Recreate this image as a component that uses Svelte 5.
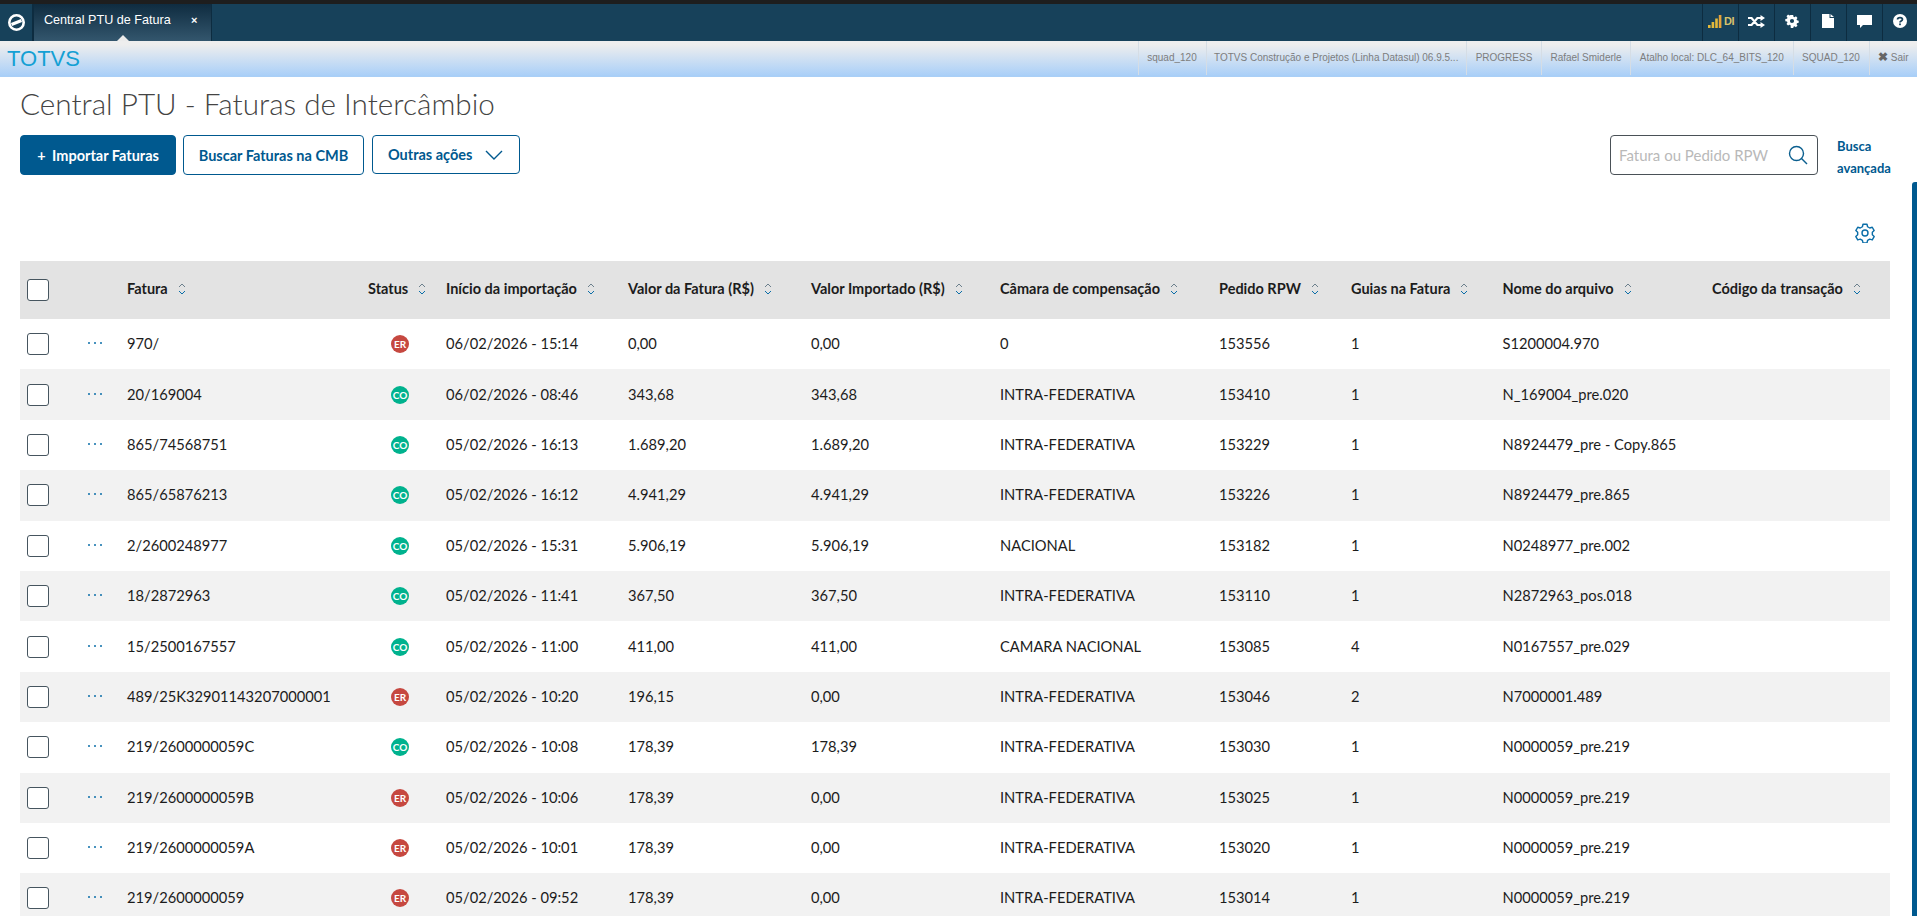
<script>
  const cols = [
    ['Fatura', 'f'], ['Status', 's'], ['Início da importação'], ['Valor da Fatura (R$)'], ['Valor Importado (R$)'],
    ['Câmara de compensação'], ['Pedido RPW'], ['Guias na Fatura'], ['Nome do arquivo'], ['Código da transação']
  ];
  const rows = [
    ['970/', 'ER', '06/02/2026 - 15:14', '0,00', '0,00', '0', '153556', '1', 'S1200004.970'],
    ['20/169004', 'CO', '06/02/2026 - 08:46', '343,68', '343,68', 'INTRA-FEDERATIVA', '153410', '1', 'N_169004_pre.020'],
    ['865/74568751', 'CO', '05/02/2026 - 16:13', '1.689,20', '1.689,20', 'INTRA-FEDERATIVA', '153229', '1', 'N8924479_pre - Copy.865'],
    ['865/65876213', 'CO', '05/02/2026 - 16:12', '4.941,29', '4.941,29', 'INTRA-FEDERATIVA', '153226', '1', 'N8924479_pre.865'],
    ['2/2600248977', 'CO', '05/02/2026 - 15:31', '5.906,19', '5.906,19', 'NACIONAL', '153182', '1', 'N0248977_pre.002'],
    ['18/2872963', 'CO', '05/02/2026 - 11:41', '367,50', '367,50', 'INTRA-FEDERATIVA', '153110', '1', 'N2872963_pos.018'],
    ['15/2500167557', 'CO', '05/02/2026 - 11:00', '411,00', '411,00', 'CAMARA NACIONAL', '153085', '4', 'N0167557_pre.029'],
    ['489/25K32901143207000001', 'ER', '05/02/2026 - 10:20', '196,15', '0,00', 'INTRA-FEDERATIVA', '153046', '2', 'N7000001.489'],
    ['219/2600000059C', 'CO', '05/02/2026 - 10:08', '178,39', '178,39', 'INTRA-FEDERATIVA', '153030', '1', 'N0000059_pre.219'],
    ['219/2600000059B', 'ER', '05/02/2026 - 10:06', '178,39', '0,00', 'INTRA-FEDERATIVA', '153025', '1', 'N0000059_pre.219'],
    ['219/2600000059A', 'ER', '05/02/2026 - 10:01', '178,39', '0,00', 'INTRA-FEDERATIVA', '153020', '1', 'N0000059_pre.219'],
    ['219/2600000059', 'ER', '05/02/2026 - 09:52', '178,39', '0,00', 'INTRA-FEDERATIVA', '153014', '1', 'N0000059_pre.219']
  ];
  const info = [
    ['squad_120', 68], ['TOTVS Construção e Projetos (Linha Datasul) 06.9.5...', 260.5], ['PROGRESS', 75],
    ['Rafael Smiderle', 89], ['Atalho local: DLC_64_BITS_120', 162.5], ['SQUAD_120', 76]
  ];
</script>

<div class="page">
  <div class="strip"></div>
  <header class="topbar">
    <div class="home">
      <svg width="19" height="19" viewBox="0 0 19 19" fill="none" stroke="#fff">
        <circle cx="9.5" cy="9.5" r="7.2" stroke-width="2.6" />
        <path d="M4.5 11.5 L14.5 7.5" stroke-width="3" />
      </svg>
    </div>
    <div class="tab">
      <span class="tab-title">Central PTU de Fatura</span>
      <span class="tab-x">×</span>
      <i class="notch"></i>
    </div>
    <div class="tools">
      <div class="tool signal">
        <svg width="14" height="13" viewBox="0 0 14 13" fill="#e2b93b">
          <rect x="0" y="10" width="2.6" height="3" /><rect x="3.6" y="7" width="2.6" height="6" />
          <rect x="7.2" y="3.5" width="2.6" height="9.5" /><rect x="10.8" y="0" width="2.6" height="13" fill="#e8a33a" />
        </svg>
        <span>DI</span>
      </div>
      <div class="tool">
        <svg width="17" height="13" viewBox="0 0 17 13" fill="none" stroke="#fff" stroke-width="2.2">
          <path d="M0 3 H3.6 L9.4 10 H13 M0 10 H3.6 L9.4 3 H13" />
          <path d="M12.5 0 L17 3 L12.5 6 Z M12.5 7 L17 10 L12.5 13 Z" fill="#fff" stroke="none" />
        </svg>
      </div>
      <div class="tool">
        <svg width="14" height="14" viewBox="0 0 16 16">
          <path fill="#fff" fill-rule="evenodd" d="M6.4 0h3.2l.4 2.3 1.4.6 1.9-1.3 2.1 2.2-1.3 1.9.6 1.4 2.3.4v3l-2.3.4-.6 1.4 1.3 1.9-2.1 2.2-1.9-1.3-1.4.6-.4 2.3H6.4L6 13.5l-1.4-.6-1.9 1.3L.6 12l1.3-1.9-.6-1.4L-1 8.3v-3l2.3-.4.6-1.4L.6 1.6 2.7-.6 4.6.7 6 .1zM8 5.2a2.6 2.6 0 100 5.6 2.6 2.6 0 000-5.6z" transform="translate(1.2 1.2) scale(.85)" />
        </svg>
      </div>
      <div class="tool">
        <svg width="12" height="14" viewBox="0 0 12 14"><path fill="#fff" d="M0 0H7.5V4H12V14H0Z M8.5 0 L12 3H8.5Z" /></svg>
      </div>
      <div class="tool">
        <svg width="15" height="13" viewBox="0 0 15 13"><path fill="#fff" d="M0 0H15V10H6L3 13V10H0Z" /></svg>
      </div>
      <div class="tool last">
        <svg width="14" height="14" viewBox="0 0 16 16">
          <circle cx="8" cy="8" r="8" fill="#fff" />
          <path d="M5.2 6.2 C5.2 3.4 10.8 3.4 10.8 6.2 C10.8 8 8 8 8 9.6" fill="none" stroke="#17415a" stroke-width="2" />
          <rect x="7" y="10.8" width="2" height="2" fill="#17415a" />
        </svg>
      </div>
    </div>
  </header>

  <div class="infobar">
    <span class="brand">TOTVS</span>
    <div class="info">
      {#each info as [label, w]}
        <span class="info-cell" style="width:{w}px">{label}</span>
      {/each}
      <span class="info-cell sair"><b>✖</b> Sair</span>
    </div>
  </div>

  <main class="content">
    <h1>Central PTU - Faturas de Intercâmbio</h1>
    <div class="actions">
      <button class="btn primary"><span class="plus">+</span> Importar Faturas</button>
      <button class="btn second">Buscar Faturas na CMB</button>
      <button class="btn third">Outras ações
        <svg width="18" height="10" viewBox="0 0 18 10" fill="none" stroke="#00598f" stroke-width="1.4"><path d="M1 1 L9 9 L17 1" /></svg>
      </button>
      <div class="grow"></div>
      <div class="search">
        <span>Fatura ou Pedido RPW</span>
        <svg width="20" height="20" viewBox="0 0 20 20" fill="none" stroke="#0b5f8f" stroke-width="1.4"><circle cx="8.5" cy="8.5" r="7" /><path d="M13.5 13.5 L19 19" /></svg>
      </div>
      <a class="adv" href="#busca">Busca avançada</a>
    </div>

    <div class="gear-row">
      <svg width="20" height="20" viewBox="0 0 24 24" fill="none" stroke="#0b6ea8" stroke-width="1.7" stroke-linejoin="round">
        <path d="M9.6 2h4.8l.7 3 2.6 1.5 3-.9 2.3 4-2.2 2.1v3l2.2 2.1-2.3 4-3-.9-2.6 1.5-.7 3H9.6l-.7-3-2.6-1.5-3 .9-2.3-4 2.2-2.1v-3L1 9.6l2.3-4 3 .9 2.6-1.5z" transform="translate(0 -.5)" />
        <circle cx="12" cy="12" r="3.6" />
      </svg>
    </div>

    <div class="table">
      <div class="row head">
        <div class="cell chk"><span class="box"></span></div>
        <div class="cell"></div>
        {#each cols as [name]}
          <div class="cell">
            <span class="hname">{name}</span>
            <svg class="sort" width="8" height="12" viewBox="0 0 8 12" fill="none" stroke-width="1"><path d="M1 4 L4 1 L7 4" stroke="#6b7f8c" /><path d="M1 8 L4 11 L7 8" stroke="#0b6ea8" /></svg>
          </div>
        {/each}
      </div>
      {#each rows as r, i}
        <div class="row" class:alt={i % 2 === 1}>
          <div class="cell chk"><span class="box"></span></div>
          <div class="cell dots"><i></i><i></i><i></i></div>
          <div class="cell text">{r[0]}</div>
          <div class="cell"><span class="badge" class:er={r[1] === 'ER'}>{r[1]}</span></div>
          {#each r.slice(2) as v}
            <div class="cell text">{v}</div>
          {/each}
          <div class="cell"></div>
        </div>
      {/each}
    </div>
  </main>
  <div class="scrollbar"></div>
</div>

<style>
  :global(body) { margin: 0; overflow: hidden; background: #fff; }
  .page { position: relative; width: 1917px; height: 916px; overflow: hidden; font-family: Lato, sans-serif; color: #1c1c1c; }
  .strip { height: 4px; background: #1e1e1e; }
  .topbar { height: 37px; background: #17415a; display: flex; font-family: "Liberation Sans", sans-serif; color: #fff; }
  .home { width: 33px; display: flex; align-items: center; justify-content: center; border-right: 1px solid #0d2c40; padding-bottom: 1px; box-sizing: border-box; }
  .tab { position: relative; width: 179px; flex: none; display: flex; align-items: center; background: linear-gradient(#0f2c40, #33566d); border-right: 1px solid #0d2c40; border-left: 1px solid #0d2c40; font-size: 12.6px; box-sizing: border-box; padding: 0 0 5px 10px; }
  .tab-title { width: 124px; white-space: nowrap; }
  .tab-x { margin-left: 23px; font-size: 11px; font-weight: 700; }
  .notch { position: absolute; left: 83px; bottom: 0; border: 6px solid transparent; border-top: 0; border-bottom-color: #ebebeb; }
  .tools { margin-left: auto; display: flex; }
  .tool { width: 35px; margin-right: 1px; display: flex; align-items: center; justify-content: center; border-left: 1px solid #0d2c40; box-sizing: border-box; padding-bottom: 3px; }
  .tool.last { width: 35px; margin: 0; }
  .signal { gap: 2px; justify-content: flex-start; padding-left: 5px; }
  .signal span { color: #d6c36c; font-size: 11px; font-weight: 700; letter-spacing: -0.5px; }
  .infobar { height: 34px; border-bottom: 2px solid #a9cff7; background: linear-gradient(#eeeeee 10%, #abd0f8); display: flex; justify-content: space-between; font-family: "Liberation Sans", sans-serif; }
  .brand { font-size: 22px; color: #14a0d4; padding: 3px 0 0 7px; line-height: 30px; }
  .info { display: flex; margin-right: 0; }
  .info-cell { display: flex; align-items: center; justify-content: center; box-sizing: border-box; border-left: 1px solid #d5dde5; font-size: 10px; color: #7d7d7d; white-space: nowrap; padding-bottom: 2px; }
  .sair { width: 48.5px; gap: 3px; }
  .sair b { font-size: 12px; color: #666; }

  .content { padding: 0 27px 0 20px; }
  h1 { margin: 0; height: 58px; font-size: 29.7px; font-weight: 300; line-height: 53px; color: #444; white-space: nowrap; }
  .actions { display: flex; align-items: flex-start; height: 40px; margin-top: 0; }
  .btn { height: 40px; box-sizing: border-box; border: 1px solid #00598f; border-radius: 4px; background: #fff; color: #00598f; font: 700 14.5px Lato, sans-serif; padding: 0; white-space: nowrap; }
  .primary { width: 156px; background: #00598f; color: #fff; }
  .plus { margin-right: 3px; }
  .second { width: 181px; margin-left: 7px; }
  .third { width: 148px; margin-left: 8px; height: 39px; display: flex; align-items: center; gap: 13px; padding-left: 15px; }
  .grow { flex: 1; }
  .search { width: 208px; height: 40px; box-sizing: border-box; border: 1px solid #4a5157; border-radius: 4px; display: flex; align-items: center; justify-content: space-between; padding: 0 9px 0 8px; color: #b9b9b9; font-size: 15px; white-space: nowrap; }
  .adv { width: 54px; margin-left: 19px; margin-right: -1px; font-size: 13px; font-weight: 700; line-height: 22px; color: #00598f; text-decoration: none; }
  .gear-row { height: 86px; box-sizing: border-box; padding: 48px 15px 0 0; display: flex; justify-content: flex-end; }
  .table { width: 1870px; }
  .row { display: grid; grid-template-columns: 68px 39px 241px 78px 182px 183px 189px 219px 132px 151.5px 209.5px 178px; height: 50.4px; align-items: center; font-size: 14.7px; white-space: nowrap; }
  .row.head { height: 58px; background: #e3e3e3; padding-bottom: 0; }
  .row.alt { background: #f2f2f2; }
  .cell { display: flex; align-items: center; min-width: 0; }
  .cell.text { padding-bottom: 2px; }
  .head .cell { padding-bottom: 3px; }
  .head .cell.chk { padding-bottom: 0; }
  .hname { font-weight: 700; color: #1c1c1c; font-size: 14.5px; }
  .sort { margin-left: 10px; flex: none; }
  .chk { padding-left: 7px; }
  .box { width: 20px; height: 20px; border: 1px solid #46555f; border-radius: 3px; background: #fff; display: block; }
  .dots { gap: 4px; padding-left: 0; padding-bottom: 2px; }
  .dots i { width: 2px; height: 2px; border-radius: 50%; background: #0b6ea8; }
  .badge { margin-left: 23px; width: 18px; height: 18px; border-radius: 50%; background: #00b28e; color: #fff; font-size: 10px; font-weight: 700; display: flex; align-items: center; justify-content: center; }
  .badge.er { background: #c64840; }
  .scrollbar { position: absolute; right: 0; top: 182px; bottom: 0; width: 5px; background: #00598f; border-radius: 3px 0 0 0; }
</style>
